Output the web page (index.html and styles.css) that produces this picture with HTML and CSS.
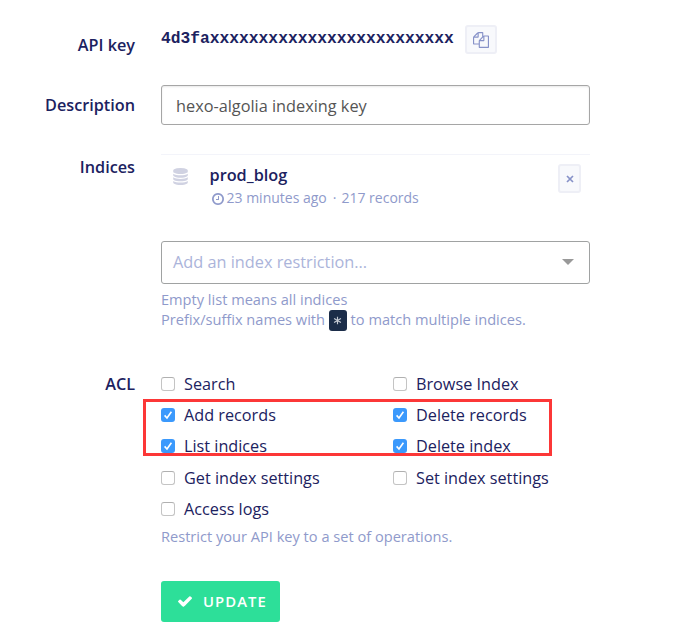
FILE: index.html
```html
<!DOCTYPE html>
<html lang="en">
<head>
<meta charset="utf-8">
<title>Edit API key</title>
<link rel="stylesheet" href="styles.css">
</head>
<body>
<form class="form">
  <div class="row row-key">
    <div class="label">API key</div>
    <div class="field key-field">
      <code class="key">4d3faxxxxxxxxxxxxxxxxxxxxxxxxx</code>
      <button type="button" class="tool copy" aria-label="Copy">
        <svg viewBox="0 0 1792 1792"><path d="M1696 384q40 0 68 28t28 68v1216q0 40-28 68t-68 28h-960q-40 0-68-28t-28-68v-288h-544q-40 0-68-28t-28-68v-672q0-40 20-88t48-76l408-408q28-28 76-48t88-20h416q40 0 68 28t28 68v328q68-40 128-40h416zm-544 213l-299 299h299v-299zm-640-384l-299 299h299v-299zm196 647l316-316v-416h-384v416q0 40-28 68t-68 28h-416v640h512v-256q0-40 20-88t48-76zm956 804v-1152h-384v416q0 40-28 68t-68 28h-416v640h896z"/></svg>
      </button>
    </div>
  </div>

  <div class="row row-description">
    <label class="label" for="description">Description</label>
    <input class="field input" id="description" type="text" value="hexo-algolia indexing key">
  </div>

  <div class="row row-indices">
    <div class="label">Indices</div>
    <div class="field">
      <div class="index">
        <svg class="database" viewBox="128 0 1536 1792"><path d="M896 768q237 0 443-43t325-127v170q0 69-103 128t-280 93.500-385 34.500-385-34.500-280-93.500-103-128v-170q119 84 325 127t443 43zm0 768q237 0 443-43t325-127v170q0 69-103 128t-280 93.500-385 34.500-385-34.500-280-93.500-103-128v-170q119 84 325 127t443 43zm0-384q237 0 443-43t325-127v170q0 69-103 128t-280 93.500-385 34.500-385-34.500-280-93.500-103-128v-170q119 84 325 127t443 43zm0-1152q208 0 385 34.500t280 93.500 103 128v128q0 69-103 128t-280 93.500-385 34.500-385-34.500-280-93.500-103-128v-128q0-69 103-128t280-93.500 385-34.500z"/></svg>
        <div class="index-info">
          <div class="index-name">prod_blog</div>
          <div class="index-meta">
            <svg class="clock" viewBox="128 128 1536 1536"><path d="M1024 544v448q0 14-9 23t-23 9h-320q-14 0-23-9t-9-23v-64q0-14 9-23t23-9h224v-352q0-14 9-23t23-9h64q14 0 23 9t9 23zm416 352q0-148-73-273t-198-198-273-73-273 73-198 198-73 273 73 273 198 198 273 73 273-73 198-198 73-273zm224 0q0 209-103 385.500t-279.500 279.500-385.500 103-385.500-103-279.500-279.500-103-385.500 103-385.500 279.500-279.500 385.500-103 385.500 103 279.500 279.500 103 385.500z"/></svg>
            <span>23 minutes ago</span><span class="dot">·</span><span>217 records</span>
          </div>
        </div>
        <button type="button" class="tool remove" aria-label="Remove">
          <svg viewBox="0 0 8 8"><path d="M1 1l6 6M7 1l-6 6"/></svg>
        </button>
      </div>
      <div class="select"><span>Add an index restriction...</span><i class="caret"></i></div>
      <div class="help">Empty list means all indices</div>
      <div class="help">Prefix/suffix names with <kbd class="star"><svg viewBox="0 0 10 10"><path d="M5 .8v8.400M1.200 2.900l7.600 4.200M8.800 2.900l-7.600 4.200"/></svg></kbd> to match multiple indices.</div>
    </div>
  </div>

  <div class="row row-acl">
    <div class="label">ACL</div>
    <div class="field">
      <div class="acl">
        <label class="option"><i class="box"></i>Search</label>
        <label class="option"><i class="box"></i>Browse Index</label>
        <label class="option"><i class="box checked"><svg viewBox="0 0 14 14"><path d="M3.600 7.400l2.400 2.600 4.400-6.300"/></svg></i>Add records</label>
        <label class="option"><i class="box checked"><svg viewBox="0 0 14 14"><path d="M3.600 7.400l2.400 2.600 4.400-6.300"/></svg></i>Delete records</label>
        <label class="option"><i class="box checked"><svg viewBox="0 0 14 14"><path d="M3.600 7.400l2.400 2.600 4.400-6.300"/></svg></i>List indices</label>
        <label class="option"><i class="box checked"><svg viewBox="0 0 14 14"><path d="M3.600 7.400l2.400 2.600 4.400-6.300"/></svg></i>Delete index</label>
        <label class="option"><i class="box"></i>Get index settings</label>
        <label class="option"><i class="box"></i>Set index settings</label>
        <label class="option"><i class="box"></i>Access logs</label>
        <div class="highlight"></div>
      </div>
      <div class="help">Restrict your API key to a set of operations.</div>
      <button type="button" class="update">
        <svg viewBox="121 334 1550 1188"><path d="M1671 566q0 40-28 68l-724 724-136 136q-28 28-68 28t-68-28l-136-136-362-362q-28-28-28-68t28-68l136-136q28-28 68-28t68 28l294 295 656-657q28-28 68-28t68 28l136 136q28 28 28 68z"/></svg>
        <span>UPDATE</span>
      </button>
    </div>
  </div>
</form>
</body>
</html>
```
FILE: styles.css
```css
* { box-sizing: border-box; }

body {
  margin: 0;
  background: #fff;
  color: #1c2260;
  font-family: "Open Sans", "Liberation Sans", sans-serif;
  font-size: 16.230px;
}

svg { display: block; fill: currentColor; }

.form { width: 590px; padding-top: 25px; }

.row {
  display: grid;
  grid-template-columns: 135px 429px;
  column-gap: 26px;
  align-items: start;
}

.label {
  text-align: right;
  font-weight: 600;
  line-height: 22px;
  white-space: nowrap;
}

.row-key { height: 60px; }
.row-key .label { padding-top: 9px; }
.key-field { display: flex; }

.key {
  width: 304px;
  font: bold 16.280px/28px "Liberation Mono", monospace;
}

.tool {
  display: flex;
  align-items: center;
  justify-content: center;
  padding: 0;
  border: 2px solid #eeeff6;
  border-radius: 3px;
  background: #f8f9fc;
  color: #8792c8;
}

.copy { width: 32px; height: 29px; }
.copy svg { width: 16px; height: 16px; }

.row-description { height: 69px; }
.row-description .label { padding-top: 9px; }

.input {
  width: 429px;
  height: 40px;
  padding: 1px 14px 0;
  border: 1px solid #a6a6a6;
  border-radius: 3px;
  box-shadow: inset 0 1px 2px #e8e8e8;
  background: #fff;
  color: #555;
  font: 16.300px "Open Sans", sans-serif;
}

.row-indices { height: 219px; }
.row-indices .label { padding-top: 2px; }

.index {
  display: flex;
  align-items: flex-start;
  height: 87px;
  padding: 9px 9px 0 12px;
  border-top: 1px solid #f3f4fa;
}

.database { width: 15px; height: 17px; margin-top: 4px; color: #d0d2e2; }
.index-info { flex: 1; margin-left: 21.500px; }
.index-name { font-weight: 600; font-size: 16.300px; line-height: 22px; }

.index-meta {
  display: flex;
  align-items: center;
  margin-left: 1px;
  color: #8f9acb;
  font-size: 14px;
  line-height: 24px;
}

.clock { width: 12px; height: 12px; margin: 1px 3px 0 1px; }
.dot { margin: 0 5px 0 6px; }
.remove { width: 23px; height: 29px; }
.remove svg { width: 8px; height: 8px; fill: none; stroke: currentColor; stroke-width: 1.700; }

.select {
  display: flex;
  align-items: center;
  justify-content: space-between;
  width: 429px;
  height: 43px;
  padding: 0 15px 2px 11px;
  border: 1px solid #a0a2a2;
  border-radius: 3px;
  color: #abb4da;
  font-size: 16.300px;
  margin-bottom: 5px;
}

.caret {
  border: 6px solid transparent;
  border-top-color: #999;
  border-bottom: 0;
}

.help {
  color: #8f9acb;
  font-size: 14.600px;
  line-height: 20px;
  white-space: nowrap;
}

.star {
  display: inline-flex;
  align-items: center;
  justify-content: center;
  width: 18px;
  height: 21px;
  margin: -3px 0 -1px;
  border-radius: 3px;
  background: #1b2d49;
  color: #c5cbd4;
  vertical-align: middle;
}

.star svg { width: 9px; height: 9px; fill: none; stroke: currentColor; stroke-width: 1.300; }

.row-acl .label { line-height: 22px; }

.acl {
  position: relative;
  display: grid;
  grid-template-columns: 232px 1fr;
  grid-auto-rows: 31.400px;
  margin-top: -5px;
}

.option { display: flex; align-items: center; }

.box {
  width: 14px;
  height: 14px;
  margin-right: 9px;
  border: 1px solid #c4c4c4;
  border-top-color: #b0b0b0;
  border-radius: 3px;
  background: #fff;
}

.box.checked { border: 0; background: #3b99fc; }
.box svg { fill: none; stroke: #fff; stroke-width: 1.600; }

.highlight {
  position: absolute;
  top: 31px;
  left: -18px;
  width: 409px;
  height: 57px;
  border: 3px solid #fc3737;
}

.row-acl .help { margin-top: 1px; }

.update {
  display: flex;
  align-items: center;
  width: 119px;
  height: 41px;
  margin-top: 35px;
  padding: 0 0 0 17px;
  border: 0;
  border-radius: 3px;
  background: #2ddf99;
  color: #fff;
  font: 600 14.800px "Open Sans", sans-serif;
  letter-spacing: 1.100px;
}

.update svg { width: 14px; height: 11px; margin-right: 11px; }
```
